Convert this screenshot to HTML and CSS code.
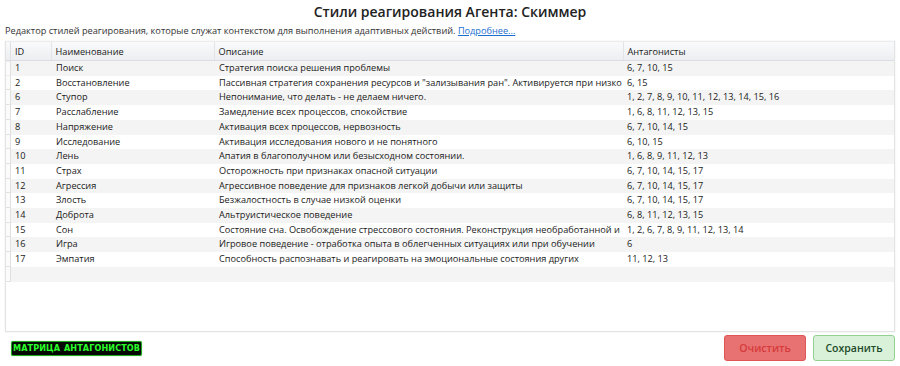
FILE: index.html
```html
<!DOCTYPE html>
<html lang="ru">

<head>
    <meta charset="UTF-8">
    <meta name="viewport" content="width=device-width, initial-scale=1.0">
    <title>Стили реагирования</title>
    <link rel="stylesheet" href="styles.css">
</head>

<body>
    <div class="page">
        <h1 class="tittel">Стили реагирования Агента: Скиммер</h1>
        <p class="undertekst">Редактор стилей реагирования, которые служат контекстом для выполнения адаптивных действий. <a href="#">Подробнее...</a></p>

        <div class="tabellBoks">
            <table class="tabell">
                <colgroup>
                    <col class="kolRad">
                    <col class="kolId">
                    <col class="kolNavn">
                    <col class="kolBeskr">
                    <col class="kolAnt">
                </colgroup>
                <thead>
                    <tr>
                        <th class="radHode"></th>
                        <th>ID</th>
                        <th>Наименование</th>
                        <th>Описание</th>
                        <th>Антагонисты</th>
                    </tr>
                </thead>
                <tbody>
                    <tr><td class="radHode"></td><td>1</td><td>Поиск</td><td>Стратегия поиска решения проблемы</td><td>6, 7, 10, 15</td></tr>
                    <tr><td class="radHode"></td><td>2</td><td>Восстановление</td><td>Пассивная стратегия сохранения ресурсов и "зализывания ран". Активируется при низко</td><td>6, 15</td></tr>
                    <tr><td class="radHode"></td><td>6</td><td>Ступор</td><td>Непонимание, что делать - не делаем ничего.</td><td>1, 2, 7, 8, 9, 10, 11, 12, 13, 14, 15, 16</td></tr>
                    <tr><td class="radHode"></td><td>7</td><td>Расслабление</td><td>Замедление всех процессов, спокойствие</td><td>1, 6, 8, 11, 12, 13, 15</td></tr>
                    <tr><td class="radHode"></td><td>8</td><td>Напряжение</td><td>Активация всех процессов, нервозность</td><td>6, 7, 10, 14, 15</td></tr>
                    <tr><td class="radHode"></td><td>9</td><td>Исследование</td><td>Активация исследования нового и не понятного</td><td>6, 10, 15</td></tr>
                    <tr><td class="radHode"></td><td>10</td><td>Лень</td><td>Апатия в благополучном или безысходном состоянии.</td><td>1, 6, 8, 9, 11, 12, 13</td></tr>
                    <tr><td class="radHode"></td><td>11</td><td>Страх</td><td>Осторожность при признаках опасной ситуации</td><td>6, 7, 10, 14, 15, 17</td></tr>
                    <tr><td class="radHode"></td><td>12</td><td>Агрессия</td><td>Агрессивное поведение для признаков легкой добычи или защиты</td><td>6, 7, 10, 14, 15, 17</td></tr>
                    <tr><td class="radHode"></td><td>13</td><td>Злость</td><td>Безжалостность в случае низкой оценки</td><td>6, 7, 10, 14, 15, 17</td></tr>
                    <tr><td class="radHode"></td><td>14</td><td>Доброта</td><td>Альтруистическое поведение</td><td>6, 8, 11, 12, 13, 15</td></tr>
                    <tr><td class="radHode"></td><td>15</td><td>Сон</td><td>Состояние сна. Освобождение стрессового состояния. Реконструкция необработанной и</td><td>1, 2, 6, 7, 8, 9, 11, 12, 13, 14</td></tr>
                    <tr><td class="radHode"></td><td>16</td><td>Игра</td><td>Игровое поведение - отработка опыта в облегченных ситуациях или при обучении</td><td>6</td></tr>
                    <tr><td class="radHode"></td><td>17</td><td>Эмпатия</td><td>Способность распознавать и реагировать на эмоциональные состояния других</td><td>11, 12, 13</td></tr>
                    <tr class="nyRad"><td class="radHode"></td><td></td><td></td><td></td><td></td></tr>
                </tbody>
            </table>
        </div>

        <div class="bunn">
            <span class="matrise">МАТРИЦА АНТАГОНИСТОВ</span>
            <div class="knapper">
                <button class="knapp rod">Очистить</button>
                <button class="knapp gronn">Сохранить</button>
            </div>
        </div>
    </div>
</body>

</html>
```

FILE: styles.css
```css
body {
    margin: 0;
    font-family: "Open Sans", "Noto Sans", sans-serif;
    color: #1a1a1a;
    background-color: white;
}

.page {
    display: flex;
    flex-direction: column;
    height: 366px;
    padding: 0 5px 0 5px;
    box-sizing: border-box;
}

.tittel {
    margin: 2px 0 0 0;
    font-size: 14px;
    font-weight: 600;
    text-align: center;
    line-height: 20px;
    color: #222;
}

.undertekst {
    margin: 3px 0 4px 0;
    font-size: 9.2px;
    line-height: 12px;
    color: #333;
}

.undertekst a {
    color: #1a6fd0;
}

.tabellBoks {
    height: 289px;
    flex-shrink: 0;
    border: 1px solid #e3e3e3;
    border-top-color: #ececec;
    box-shadow: 0 0 2px rgba(0, 0, 0, 0.08);
    overflow: hidden;
}

.tabell {
    width: 100%;
    border-collapse: collapse;
    table-layout: fixed;
    font-size: 9.2px;
}

.kolRad { width: 5px; }
.kolId { width: 40px; }
.kolNavn { width: 163px; }
.kolBeskr { width: 409px; }

.tabell th {
    height: 18px;
    padding: 0 0 0 4px;
    text-align: left;
    font-weight: normal;
    background: linear-gradient(#f9fafb, #eceef1);
    border-bottom: 1px solid #dadde2;
    border-right: 1px solid #e2e4e8;
    white-space: nowrap;
    overflow: hidden;
}

.tabell th:last-child {
    border-right: none;
}

.tabell td {
    height: 14.7px;
    padding: 0 0 0 4px;
    white-space: nowrap;
    overflow: hidden;
    line-height: 14.7px;
}

.tabell td:nth-child(3),
.tabell td:nth-child(4) {
    padding-left: 5px;
}

.tabell tbody tr:nth-child(odd) {
    background-color: #f4f4f4;
}

.tabell .radHode {
    padding: 0;
    background: linear-gradient(to top, #e2e2e2 1px, #fbfbfb 1px);
    box-shadow: inset -1px 0 0 #e0e0e0;
}

.tabell th.radHode {
    background: linear-gradient(#f9fafb, #eceef1);
    border-right: none;
}

.bunn {
    display: flex;
    align-items: center;
    justify-content: space-between;
    margin-top: 3px;
}

.matrise {
    margin-left: 6px;
    padding: 0 1px;
    background-color: #050805;
    color: #2bff2b;
    border: 1px solid #22aa22;
    border-radius: 2px;
    box-shadow: 0 0 1px #33cc33;
    font-family: "DejaVu Sans", sans-serif;
    font-stretch: condensed;
    font-weight: bold;
    font-size: 9px;
    line-height: 13px;
    letter-spacing: 0.1px;
    word-spacing: 1px;
}

.knapper {
    display: flex;
    gap: 7px;
}

.knapp {
    width: 82px;
    height: 26px;
    border-radius: 3px;
    font-family: "Open Sans", "Noto Sans", sans-serif;
    font-size: 10.5px;
    font-weight: 600;
}

.rod {
    background-color: #e87272;
    border: 1px solid #e05555;
    color: #d63a3a;
}

.gronn {
    background-color: #d9f1d9;
    border: 1px solid #93cf93;
    color: #1e4a2a;
}
```
